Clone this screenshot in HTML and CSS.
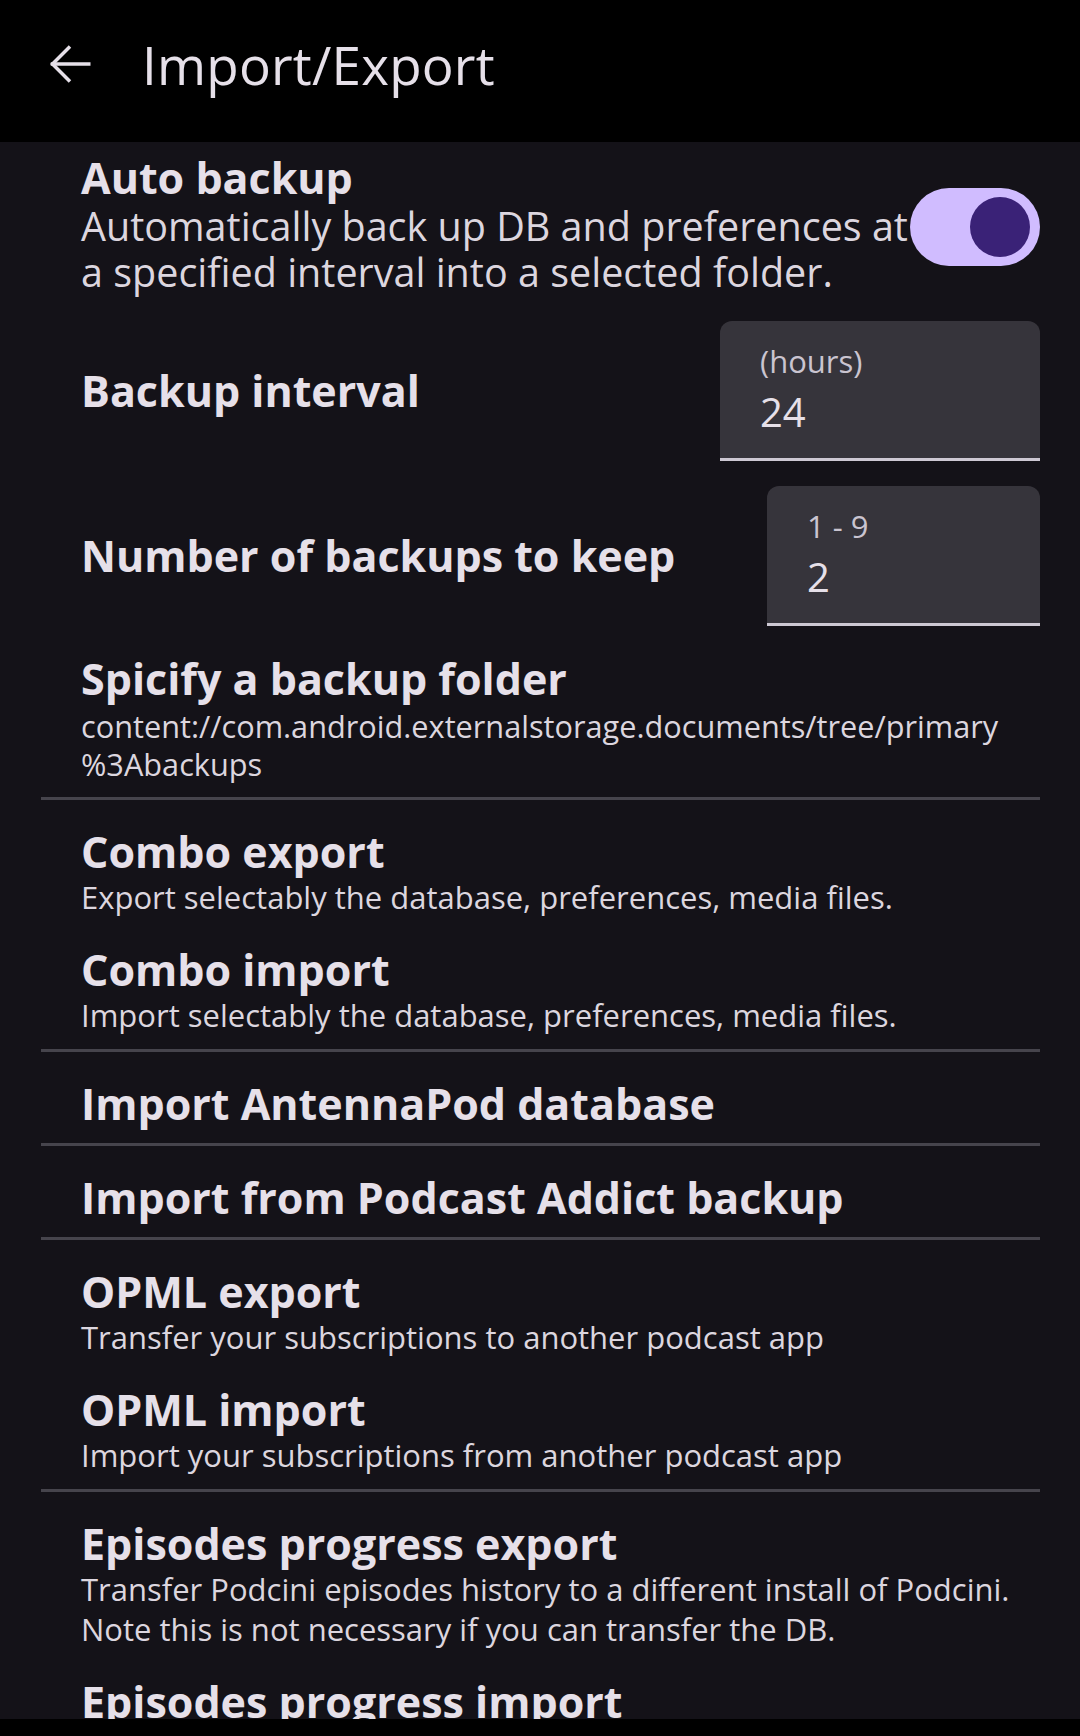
FILE: index.html
```html
<!DOCTYPE html>
<html lang="en">
<head>
	<meta charset="UTF-8">
	<meta name="viewport" content="width=device-width, initial-scale=1.0">
	<title>Import/Export</title>
	<link rel="stylesheet" href="styles.css">
</head>
<body>
	<header class="appbar">
		<button class="back" aria-label="Back">
			<svg viewBox="0 0 24 24" width="60" height="60" fill="none" stroke="currentColor" stroke-width="1.4" stroke-linecap="square">
				<path d="M19.5 12H5"></path>
				<path d="M11.5 5.5L5 12l6.5 6.5"></path>
			</svg>
		</button>
		<h1>Import/Export</h1>
	</header>

	<main class="prefs">
		<section class="group group-first">
			<div class="pref pref-switch">
				<div class="pref-text">
					<h2>Auto backup</h2>
					<p class="summary-lg">Automatically back up DB and preferences at a specified interval into a selected folder.</p>
				</div>
				<span class="switch is-on" role="switch" aria-checked="true"><span class="thumb"></span></span>
			</div>

			<div class="pref pref-field">
				<h2>Backup interval</h2>
				<label class="field field-wide">
					<span class="field-label">(hours)</span>
					<span class="field-value">24</span>
				</label>
			</div>

			<div class="pref pref-field">
				<h2>Number of backups to keep</h2>
				<label class="field field-narrow">
					<span class="field-label">1 - 9</span>
					<span class="field-value">2</span>
				</label>
			</div>

			<div class="pref">
				<h2>Spicify a backup folder</h2>
				<p class="summary-path">content://com.android.externalstorage.documents/tree/primary<wbr>%3Abackups</p>
			</div>
		</section>

		<section class="group">
			<div class="pref">
				<h2>Combo export</h2>
				<p>Export selectably the database, preferences, media files.</p>
			</div>
			<div class="pref">
				<h2>Combo import</h2>
				<p>Import selectably the database, preferences, media files.</p>
			</div>
		</section>

		<section class="group">
			<div class="pref">
				<h2>Import AntennaPod database</h2>
			</div>
		</section>

		<section class="group">
			<div class="pref">
				<h2>Import from Podcast Addict backup</h2>
			</div>
		</section>

		<section class="group">
			<div class="pref">
				<h2>OPML export</h2>
				<p>Transfer your subscriptions to another podcast app</p>
			</div>
			<div class="pref">
				<h2>OPML import</h2>
				<p>Import your subscriptions from another podcast app</p>
			</div>
		</section>

		<section class="group">
			<div class="pref">
				<h2>Episodes progress export</h2>
				<p>Transfer Podcini episodes history to a different install of Podcini. Note this is not necessary if you can transfer the DB.</p>
			</div>
			<div class="pref">
				<h2>Episodes progress import</h2>
				<p>Import Podcini episodes history from a different install of Podcini.</p>
			</div>
		</section>
	</main>

	<div class="navbar"></div>
</body>
</html>
```

FILE: styles.css
```css
html {
	box-sizing: border-box;
}

*, *:before, *:after {
	box-sizing: inherit;
}

body {
	margin: 0;
	height: 1736px;
	overflow: hidden;
	display: flex;
	flex-direction: column;
	background: #141218;
	color: #e6e0e9;
	font-family: "Open Sans", "Noto Sans", sans-serif;
}

.appbar {
	flex: none;
	height: 142px;
	background: #000;
	display: flex;
	align-items: center;
	padding: 0 0 14px 40px;
}

.back {
	display: flex;
	padding: 0;
	margin: 0;
	border: 0;
	background: none;
	color: #e6e0e9;
}

.appbar h1 {
	margin: 0 0 0 42px;
	font-size: 53px;
	font-weight: 400;
	letter-spacing: 0.2px;
}

.prefs {
	flex: 1;
	overflow: hidden;
	padding: 0 40px 0 41px;
}

.group {
	padding-top: 13px;
	border-bottom: 3px solid #46444c;
}

.group-first {
	padding-top: 0;
}

.pref {
	padding: 14px 0 14px 40px;
}

.group-first .pref:first-child {
	padding-top: 11px;
}

.pref h2 {
	margin: 0;
	font-size: 43px;
	line-height: 50px;
	font-weight: 700;
	letter-spacing: 0;
}

.pref p {
	margin: 0;
	font-size: 31px;
	line-height: 40px;
	color: #dcd6df;
}

.pref p.summary-lg {
	font-size: 39.5px;
	line-height: 46px;
}

.pref p.summary-path {
	margin-top: 3px;
	font-size: 30.7px;
	line-height: 38px;
}

/* switch row */
.pref-switch {
	display: flex;
	align-items: center;
}

.pref-text {
	flex: 1;
	min-width: 0;
}

.switch {
	flex: none;
	width: 130px;
	height: 78px;
	border-radius: 39px;
	background: #d0bcff;
	display: flex;
	align-items: center;
	justify-content: flex-end;
	padding-right: 10px;
	margin-top: 6px;
}

.thumb {
	width: 60px;
	height: 60px;
	border-radius: 50%;
	background: #3a2277;
}

/* rows with an inline number field */
.pref-field {
	display: flex;
	align-items: center;
	justify-content: space-between;
	padding-top: 12px;
	padding-bottom: 13px;
}

.pref-field + .pref-field {
	padding-bottom: 14px;
}

.field {
	display: flex;
	flex-direction: column;
	height: 140px;
	padding: 20px 40px 0;
	background: #36343b;
	border-radius: 12px 12px 0 0;
	border-bottom: 3px solid #cdc8d3;
}

.field-wide {
	width: 320px;
}

.field-narrow {
	width: 273px;
}

.field-label {
	font-size: 31px;
	line-height: 40px;
	color: #cac4d0;
}

.field-value {
	margin-top: 7px;
	font-size: 40px;
	line-height: 48px;
}

.navbar {
	flex: none;
	height: 17px;
	background: #000;
}
```
